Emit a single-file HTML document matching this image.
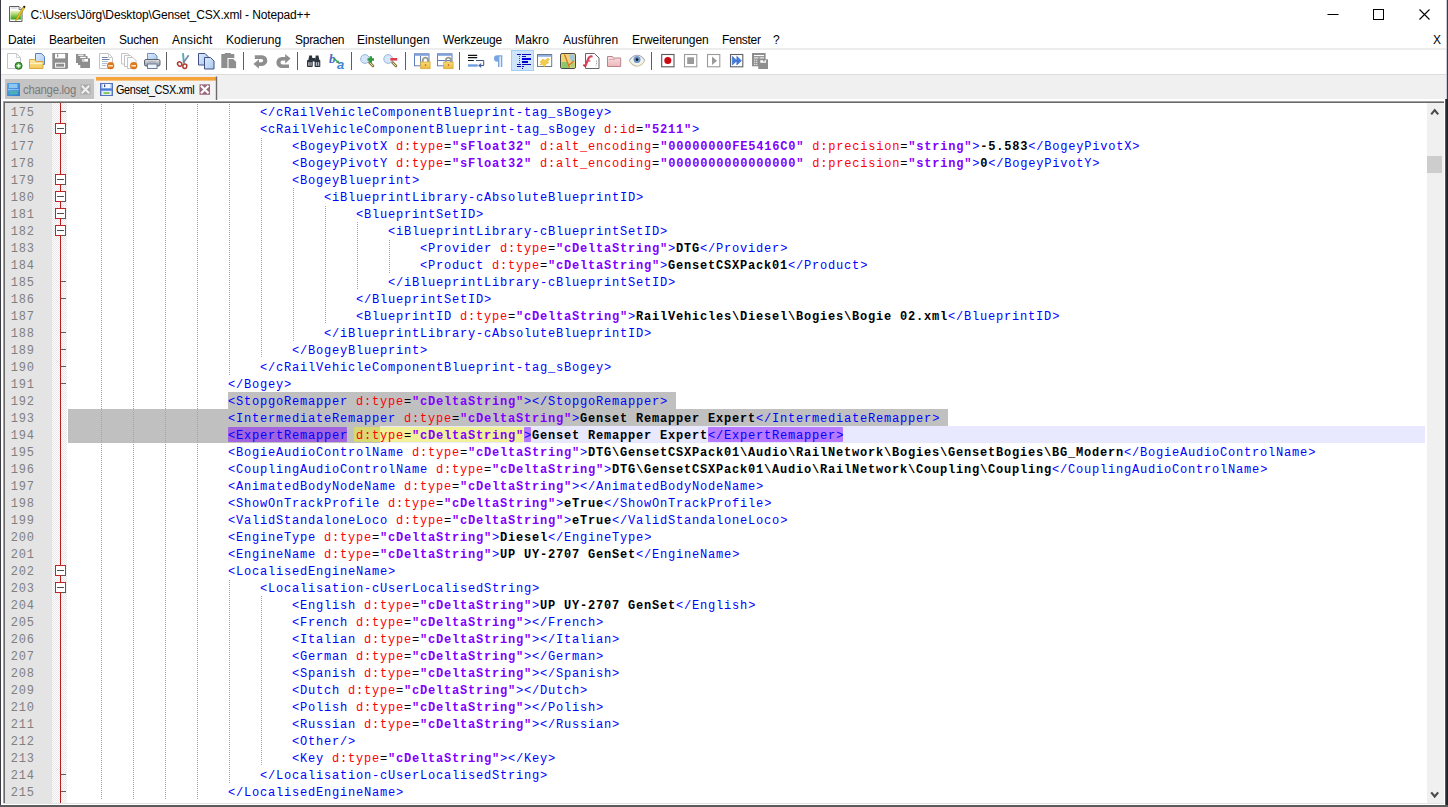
<!DOCTYPE html>
<html lang="de"><head><meta charset="utf-8"><title>Genset_CSX.xml - Notepad++</title>
<style>
*{box-sizing:border-box;margin:0;padding:0}
html,body{width:1448px;height:807px;overflow:hidden;background:#fff}
body{position:relative;font-family:"Liberation Sans",sans-serif;font-size:12px;color:#000}
.abs{position:absolute}
#title{position:absolute;left:30.500px;top:7px;height:16px;line-height:16px;font-size:12px;white-space:nowrap;letter-spacing:-0.13px}
.mi{position:absolute;top:32px;height:16px;line-height:16px;font-size:12px;white-space:nowrap}
.tabt{position:absolute;top:82px;height:16px;line-height:16px;font-size:12px;white-space:nowrap;transform-origin:0 50%}
#tbtop{position:absolute;left:1px;top:48px;width:1445px;height:2px;background:#ededed}
#tbbot{position:absolute;left:1px;top:74px;width:1445px;height:1px;background:#dcdcdc}
#tabbar{position:absolute;left:1px;top:75px;width:1445px;height:24px;background:#f0f0f0}
#edb1{position:absolute;left:3px;top:101px;width:1441px;height:703px;background:#a0a0a0}
#edb2{position:absolute;left:4px;top:102px;width:1440px;height:702px;background:#696969}
#edbg{position:absolute;left:5px;top:103px;width:1439px;height:700px;background:#fff}
#edbot{position:absolute;left:3px;top:803px;width:1441px;height:1px;background:#e3e3e3}
#lnm{position:absolute;left:5px;top:103px;width:47px;height:700px;background:#e4e4e4}
#fm{position:absolute;left:52px;top:103px;width:15px;height:700px;background-color:#fff;background-image:conic-gradient(#e6e6e6 25%,transparent 0 50%,#e6e6e6 0 75%,transparent 0);background-size:2px 2px}
#fl{position:absolute;left:60px;top:103px;width:1px;height:700px;background:#b81c1c}
.ln{position:absolute;left:10px;width:24.800px;height:17px;line-height:17.700px;text-align:right;font-family:"Liberation Mono",monospace;font-size:12px;letter-spacing:.800px;color:#808080}
.cl{position:absolute;height:17px;line-height:17.700px;white-space:pre;font-family:"Liberation Mono",monospace;font-size:12px;letter-spacing:.799px}
.t{color:#0000ff}.a{color:#ff0000}.e{color:#000}.v{color:#8000ff;font-weight:bold}.x{color:#000;font-weight:bold}
.ig{position:absolute;width:1px;background-image:linear-gradient(#a4a4a4 50%,transparent 50%);background-size:1px 2px}
.fb{position:absolute;left:55px;width:11px;height:11px;border:1px solid;border-color:#c02525 #5a5a5a #5a5a5a #c02525;background:#fff}
.fb b{position:absolute;left:0;bottom:-1px;width:5px;height:1px;background:#c02525}
.fb i{position:absolute;left:1px;top:4px;width:7px;height:1px;background:#505050}
.fe{position:absolute;left:61px;width:5px;height:1px;background:#606060}
.sel{position:absolute;height:17px;background:#c0c0c0}
.cur{position:absolute;left:68px;width:1357px;height:17px;background:#e8e8ff}
.tm{position:absolute;height:15px;background:rgba(128,0,255,.48);border-radius:1px}
.am{position:absolute;height:15px;background:rgba(255,255,0,.40);border-radius:1px}
#sb{position:absolute;left:1427px;top:103px;width:17px;height:700px;background:#f0f0f0}
#thumb{position:absolute;left:1427px;top:156px;width:15px;height:17px;background:#cdcdcd}
</style></head><body>
<div class="abs" style="left:0;top:0;width:1px;height:807px;background:#3a3d45"></div>
<div class="abs" style="left:1447px;top:0;width:1px;height:99px;background:#3a3e48"></div><div class="abs" style="left:1446px;top:0;width:1px;height:99px;background:#c8cad0"></div><div class="abs" style="left:1445px;top:99px;width:3px;height:708px;background:linear-gradient(90deg,#666c7a 0,#2a2c32 45%,#1e1f22 100%)"></div>
<div id="title">C:\Users\Jörg\Desktop\Genset_CSX.xml - Notepad++</div>
<span class="mi" style="left:8px;letter-spacing:-0.16px">Datei</span><span class="mi" style="left:49px;letter-spacing:-0.18px">Bearbeiten</span><span class="mi" style="left:119px;letter-spacing:-0.25px">Suchen</span><span class="mi" style="left:172px;letter-spacing:0.16px">Ansicht</span><span class="mi" style="left:226px;letter-spacing:0.05px">Kodierung</span><span class="mi" style="left:295px;letter-spacing:-0.27px">Sprachen</span><span class="mi" style="left:357px;letter-spacing:0.05px">Einstellungen</span><span class="mi" style="left:443px;letter-spacing:-0.16px">Werkzeuge</span><span class="mi" style="left:515px;letter-spacing:0.13px">Makro</span><span class="mi" style="left:563px;letter-spacing:0.05px">Ausführen</span><span class="mi" style="left:632px;letter-spacing:-0.05px">Erweiterungen</span><span class="mi" style="left:722px;letter-spacing:-0.28px">Fenster</span><span class="mi" style="left:773px;letter-spacing:0.00px">?</span>
<span class="mi" style="left:1433px">X</span>
<div id="tbtop"></div><div id="tbbot"></div>
<div id="tabbar"></div>
<div id="edb1"></div><div id="edb2"></div><div id="edbg"></div><div id="edbot"></div>
<div id="lnm"></div><div id="fm"></div>
<div class="cur" style="top:426px"></div><div class="sel" style="top:392px;left:228px;width:448px"></div><div class="sel" style="top:409px;left:68px;width:880px"></div><div class="sel" style="top:426px;left:68px;width:312px"></div><div class="tm" style="top:427px;left:228px;width:119px"></div><div class="am" style="top:427px;left:354px;width:170px"></div><div class="tm" style="top:427px;left:524px;width:7px"></div><div class="tm" style="top:427px;left:708px;width:135px"></div>
<div id="fl"></div>
<div class="ig" style="left:101px;top:103px;height:697px;background-position:0 1px"></div><div class="ig" style="left:133px;top:103px;height:697px;background-position:0 1px"></div><div class="ig" style="left:165px;top:103px;height:697px;background-position:0 1px"></div><div class="ig" style="left:197px;top:103px;height:697px;background-position:0 1px"></div><div class="ig" style="left:229px;top:103px;height:272px;background-position:0 1px"></div><div class="ig" style="left:229px;top:579px;height:204px;background-position:0 1px"></div><div class="ig" style="left:261px;top:137px;height:221px;background-position:0 1px"></div><div class="ig" style="left:261px;top:596px;height:170px"></div><div class="ig" style="left:293px;top:188px;height:153px"></div><div class="ig" style="left:325px;top:205px;height:119px;background-position:0 1px"></div><div class="ig" style="left:357px;top:222px;height:68px"></div><div class="ig" style="left:389px;top:239px;height:34px;background-position:0 1px"></div><div class="fe" style="top:111px"></div><div class="fb" style="top:123px"><i></i><b></b></div><div class="fb" style="top:174px"><i></i><b></b></div><div class="fb" style="top:191px"><i></i><b></b></div><div class="fb" style="top:208px"><i></i><b></b></div><div class="fb" style="top:225px"><i></i><b></b></div><div class="fe" style="top:281px"></div><div class="fe" style="top:298px"></div><div class="fe" style="top:332px"></div><div class="fe" style="top:349px"></div><div class="fe" style="top:366px"></div><div class="fe" style="top:383px"></div><div class="fb" style="top:565px"><i></i><b></b></div><div class="fb" style="top:582px"><i></i><b></b></div><div class="fe" style="top:774px"></div><div class="fe" style="top:791px"></div><div class="ln" style="top:105px">175</div><div class="ln" style="top:122px">176</div><div class="ln" style="top:139px">177</div><div class="ln" style="top:156px">178</div><div class="ln" style="top:173px">179</div><div class="ln" style="top:190px">180</div><div class="ln" style="top:207px">181</div><div class="ln" style="top:224px">182</div><div class="ln" style="top:241px">183</div><div class="ln" style="top:258px">184</div><div class="ln" style="top:275px">185</div><div class="ln" style="top:292px">186</div><div class="ln" style="top:309px">187</div><div class="ln" style="top:326px">188</div><div class="ln" style="top:343px">189</div><div class="ln" style="top:360px">190</div><div class="ln" style="top:377px">191</div><div class="ln" style="top:394px">192</div><div class="ln" style="top:411px">193</div><div class="ln" style="top:428px">194</div><div class="ln" style="top:445px">195</div><div class="ln" style="top:462px">196</div><div class="ln" style="top:479px">197</div><div class="ln" style="top:496px">198</div><div class="ln" style="top:513px">199</div><div class="ln" style="top:530px">200</div><div class="ln" style="top:547px">201</div><div class="ln" style="top:564px">202</div><div class="ln" style="top:581px">203</div><div class="ln" style="top:598px">204</div><div class="ln" style="top:615px">205</div><div class="ln" style="top:632px">206</div><div class="ln" style="top:649px">207</div><div class="ln" style="top:666px">208</div><div class="ln" style="top:683px">209</div><div class="ln" style="top:700px">210</div><div class="ln" style="top:717px">211</div><div class="ln" style="top:734px">212</div><div class="ln" style="top:751px">213</div><div class="ln" style="top:768px">214</div><div class="ln" style="top:785px">215</div><div class="cl" style="top:105px;left:260px"><span class="t">&lt;/cRailVehicleComponentBlueprint-tag_sBogey</span><span class="t">&gt;</span></div><div class="cl" style="top:122px;left:260px"><span class="t">&lt;cRailVehicleComponentBlueprint-tag_sBogey</span><span class="t"> </span><span class="a">d:id</span><span class="e">=</span><span class="v">"5211"</span><span class="t">&gt;</span></div><div class="cl" style="top:139px;left:292px"><span class="t">&lt;BogeyPivotX</span><span class="t"> </span><span class="a">d:type</span><span class="e">=</span><span class="v">"sFloat32"</span><span class="t"> </span><span class="a">d:alt_encoding</span><span class="e">=</span><span class="v">"00000000FE5416C0"</span><span class="t"> </span><span class="a">d:precision</span><span class="e">=</span><span class="v">"string"</span><span class="t">&gt;</span><span class="x">-5.583</span><span class="t">&lt;/BogeyPivotX</span><span class="t">&gt;</span></div><div class="cl" style="top:156px;left:292px"><span class="t">&lt;BogeyPivotY</span><span class="t"> </span><span class="a">d:type</span><span class="e">=</span><span class="v">"sFloat32"</span><span class="t"> </span><span class="a">d:alt_encoding</span><span class="e">=</span><span class="v">"0000000000000000"</span><span class="t"> </span><span class="a">d:precision</span><span class="e">=</span><span class="v">"string"</span><span class="t">&gt;</span><span class="x">0</span><span class="t">&lt;/BogeyPivotY</span><span class="t">&gt;</span></div><div class="cl" style="top:173px;left:292px"><span class="t">&lt;BogeyBlueprint</span><span class="t">&gt;</span></div><div class="cl" style="top:190px;left:324px"><span class="t">&lt;iBlueprintLibrary-cAbsoluteBlueprintID</span><span class="t">&gt;</span></div><div class="cl" style="top:207px;left:356px"><span class="t">&lt;BlueprintSetID</span><span class="t">&gt;</span></div><div class="cl" style="top:224px;left:388px"><span class="t">&lt;iBlueprintLibrary-cBlueprintSetID</span><span class="t">&gt;</span></div><div class="cl" style="top:241px;left:420px"><span class="t">&lt;Provider</span><span class="t"> </span><span class="a">d:type</span><span class="e">=</span><span class="v">"cDeltaString"</span><span class="t">&gt;</span><span class="x">DTG</span><span class="t">&lt;/Provider</span><span class="t">&gt;</span></div><div class="cl" style="top:258px;left:420px"><span class="t">&lt;Product</span><span class="t"> </span><span class="a">d:type</span><span class="e">=</span><span class="v">"cDeltaString"</span><span class="t">&gt;</span><span class="x">GensetCSXPack01</span><span class="t">&lt;/Product</span><span class="t">&gt;</span></div><div class="cl" style="top:275px;left:388px"><span class="t">&lt;/iBlueprintLibrary-cBlueprintSetID</span><span class="t">&gt;</span></div><div class="cl" style="top:292px;left:356px"><span class="t">&lt;/BlueprintSetID</span><span class="t">&gt;</span></div><div class="cl" style="top:309px;left:356px"><span class="t">&lt;BlueprintID</span><span class="t"> </span><span class="a">d:type</span><span class="e">=</span><span class="v">"cDeltaString"</span><span class="t">&gt;</span><span class="x">RailVehicles\Diesel\Bogies\Bogie 02.xml</span><span class="t">&lt;/BlueprintID</span><span class="t">&gt;</span></div><div class="cl" style="top:326px;left:324px"><span class="t">&lt;/iBlueprintLibrary-cAbsoluteBlueprintID</span><span class="t">&gt;</span></div><div class="cl" style="top:343px;left:292px"><span class="t">&lt;/BogeyBlueprint</span><span class="t">&gt;</span></div><div class="cl" style="top:360px;left:260px"><span class="t">&lt;/cRailVehicleComponentBlueprint-tag_sBogey</span><span class="t">&gt;</span></div><div class="cl" style="top:377px;left:228px"><span class="t">&lt;/Bogey</span><span class="t">&gt;</span></div><div class="cl" style="top:394px;left:228px"><span class="t">&lt;StopgoRemapper</span><span class="t"> </span><span class="a">d:type</span><span class="e">=</span><span class="v">"cDeltaString"</span><span class="t">&gt;</span><span class="t">&lt;/StopgoRemapper</span><span class="t">&gt;</span></div><div class="cl" style="top:411px;left:228px"><span class="t">&lt;IntermediateRemapper</span><span class="t"> </span><span class="a">d:type</span><span class="e">=</span><span class="v">"cDeltaString"</span><span class="t">&gt;</span><span class="x">Genset Remapper Expert</span><span class="t">&lt;/IntermediateRemapper</span><span class="t">&gt;</span></div><div class="cl" style="top:428px;left:228px"><span class="t">&lt;ExpertRemapper</span><span class="t"> </span><span class="a">d:type</span><span class="e">=</span><span class="v">"cDeltaString"</span><span class="t">&gt;</span><span class="x">Genset Remapper Expert</span><span class="t">&lt;/ExpertRemapper</span><span class="t">&gt;</span></div><div class="cl" style="top:445px;left:228px"><span class="t">&lt;BogieAudioControlName</span><span class="t"> </span><span class="a">d:type</span><span class="e">=</span><span class="v">"cDeltaString"</span><span class="t">&gt;</span><span class="x">DTG\GensetCSXPack01\Audio\RailNetwork\Bogies\GensetBogies\BG_Modern</span><span class="t">&lt;/BogieAudioControlName</span><span class="t">&gt;</span></div><div class="cl" style="top:462px;left:228px"><span class="t">&lt;CouplingAudioControlName</span><span class="t"> </span><span class="a">d:type</span><span class="e">=</span><span class="v">"cDeltaString"</span><span class="t">&gt;</span><span class="x">DTG\GensetCSXPack01\Audio\RailNetwork\Coupling\Coupling</span><span class="t">&lt;/CouplingAudioControlName</span><span class="t">&gt;</span></div><div class="cl" style="top:479px;left:228px"><span class="t">&lt;AnimatedBodyNodeName</span><span class="t"> </span><span class="a">d:type</span><span class="e">=</span><span class="v">"cDeltaString"</span><span class="t">&gt;</span><span class="t">&lt;/AnimatedBodyNodeName</span><span class="t">&gt;</span></div><div class="cl" style="top:496px;left:228px"><span class="t">&lt;ShowOnTrackProfile</span><span class="t"> </span><span class="a">d:type</span><span class="e">=</span><span class="v">"cDeltaString"</span><span class="t">&gt;</span><span class="x">eTrue</span><span class="t">&lt;/ShowOnTrackProfile</span><span class="t">&gt;</span></div><div class="cl" style="top:513px;left:228px"><span class="t">&lt;ValidStandaloneLoco</span><span class="t"> </span><span class="a">d:type</span><span class="e">=</span><span class="v">"cDeltaString"</span><span class="t">&gt;</span><span class="x">eTrue</span><span class="t">&lt;/ValidStandaloneLoco</span><span class="t">&gt;</span></div><div class="cl" style="top:530px;left:228px"><span class="t">&lt;EngineType</span><span class="t"> </span><span class="a">d:type</span><span class="e">=</span><span class="v">"cDeltaString"</span><span class="t">&gt;</span><span class="x">Diesel</span><span class="t">&lt;/EngineType</span><span class="t">&gt;</span></div><div class="cl" style="top:547px;left:228px"><span class="t">&lt;EngineName</span><span class="t"> </span><span class="a">d:type</span><span class="e">=</span><span class="v">"cDeltaString"</span><span class="t">&gt;</span><span class="x">UP UY-2707 GenSet</span><span class="t">&lt;/EngineName</span><span class="t">&gt;</span></div><div class="cl" style="top:564px;left:228px"><span class="t">&lt;LocalisedEngineName</span><span class="t">&gt;</span></div><div class="cl" style="top:581px;left:260px"><span class="t">&lt;Localisation-cUserLocalisedString</span><span class="t">&gt;</span></div><div class="cl" style="top:598px;left:292px"><span class="t">&lt;English</span><span class="t"> </span><span class="a">d:type</span><span class="e">=</span><span class="v">"cDeltaString"</span><span class="t">&gt;</span><span class="x">UP UY-2707 GenSet</span><span class="t">&lt;/English</span><span class="t">&gt;</span></div><div class="cl" style="top:615px;left:292px"><span class="t">&lt;French</span><span class="t"> </span><span class="a">d:type</span><span class="e">=</span><span class="v">"cDeltaString"</span><span class="t">&gt;</span><span class="t">&lt;/French</span><span class="t">&gt;</span></div><div class="cl" style="top:632px;left:292px"><span class="t">&lt;Italian</span><span class="t"> </span><span class="a">d:type</span><span class="e">=</span><span class="v">"cDeltaString"</span><span class="t">&gt;</span><span class="t">&lt;/Italian</span><span class="t">&gt;</span></div><div class="cl" style="top:649px;left:292px"><span class="t">&lt;German</span><span class="t"> </span><span class="a">d:type</span><span class="e">=</span><span class="v">"cDeltaString"</span><span class="t">&gt;</span><span class="t">&lt;/German</span><span class="t">&gt;</span></div><div class="cl" style="top:666px;left:292px"><span class="t">&lt;Spanish</span><span class="t"> </span><span class="a">d:type</span><span class="e">=</span><span class="v">"cDeltaString"</span><span class="t">&gt;</span><span class="t">&lt;/Spanish</span><span class="t">&gt;</span></div><div class="cl" style="top:683px;left:292px"><span class="t">&lt;Dutch</span><span class="t"> </span><span class="a">d:type</span><span class="e">=</span><span class="v">"cDeltaString"</span><span class="t">&gt;</span><span class="t">&lt;/Dutch</span><span class="t">&gt;</span></div><div class="cl" style="top:700px;left:292px"><span class="t">&lt;Polish</span><span class="t"> </span><span class="a">d:type</span><span class="e">=</span><span class="v">"cDeltaString"</span><span class="t">&gt;</span><span class="t">&lt;/Polish</span><span class="t">&gt;</span></div><div class="cl" style="top:717px;left:292px"><span class="t">&lt;Russian</span><span class="t"> </span><span class="a">d:type</span><span class="e">=</span><span class="v">"cDeltaString"</span><span class="t">&gt;</span><span class="t">&lt;/Russian</span><span class="t">&gt;</span></div><div class="cl" style="top:734px;left:292px"><span class="t">&lt;Other</span><span class="t">/&gt;</span></div><div class="cl" style="top:751px;left:292px"><span class="t">&lt;Key</span><span class="t"> </span><span class="a">d:type</span><span class="e">=</span><span class="v">"cDeltaString"</span><span class="t">&gt;</span><span class="t">&lt;/Key</span><span class="t">&gt;</span></div><div class="cl" style="top:768px;left:260px"><span class="t">&lt;/Localisation-cUserLocalisedString</span><span class="t">&gt;</span></div><div class="cl" style="top:785px;left:228px"><span class="t">&lt;/LocalisedEngineName</span><span class="t">&gt;</span></div>
<div id="sb"></div><div id="thumb"></div>
<div class="abs" style="left:0;top:805px;width:1448px;height:2px;background:#5c5c5c"></div>
<svg class="abs" style="left:0;top:0" width="1448" height="102" viewBox="0 0 1448 102">
<defs>
<linearGradient id="gfold" x1="0" y1="0" x2="0" y2="1"><stop offset="0" stop-color="#fbe9a6"/><stop offset="1" stop-color="#f3c85a"/></linearGradient>
<linearGradient id="gpage" x1="0" y1="0" x2="1" y2="1"><stop offset="0" stop-color="#dcebfb"/><stop offset="1" stop-color="#a9c9f0"/></linearGradient>
<linearGradient id="glock" x1="0" y1="0" x2="0" y2="1"><stop offset="0" stop-color="#f7dc7c"/><stop offset="1" stop-color="#e9b93a"/></linearGradient>
<linearGradient id="ggreen" x1="0" y1="0" x2="0" y2="1"><stop offset="0" stop-color="#e8f4d0"/><stop offset="1" stop-color="#3c9a1c"/></linearGradient>
<linearGradient id="gprn" x1="0" y1="0" x2="0" y2="1"><stop offset="0" stop-color="#e6e8ec"/><stop offset="1" stop-color="#8c929c"/></linearGradient>
<linearGradient id="gpink" x1="0" y1="0" x2="0" y2="1"><stop offset="0" stop-color="#f9e3e5"/><stop offset="1" stop-color="#eeb4ba"/></linearGradient>
</defs>
<!-- separators -->
<g fill="#5e5e5e"><rect x="166" y="52" width="1" height="18"/><rect x="243" y="52" width="1" height="18"/><rect x="297" y="52" width="1" height="18"/><rect x="351" y="52" width="1" height="18"/><rect x="405" y="52" width="1" height="18"/><rect x="459" y="52" width="1" height="18"/><rect x="651" y="52" width="1" height="18"/></g>
<!-- 1 new -->
<path d="M7.5 53.5h9l4 4v11h-13z" fill="#fdfdfd" stroke="#c4c4c8"/><path d="M16.5 53.5v4h4" fill="none" stroke="#d0d0d4"/>
<circle cx="18.600" cy="65.800" r="3.500" fill="#4aa840" stroke="#2a6a24" stroke-width="1"/><path d="M16.6 65.8h4M18.6 63.8v4" stroke="#e8ffe0" stroke-width="1.4"/>
<!-- 2 open -->
<path d="M35.5 53.5h6l3 3v8h-9z" fill="url(#gpage)" stroke="#5f7fc4"/>
<path d="M29.5 68.5v-9h5l1.5 2h7v7z" fill="url(#gfold)" stroke="#d9a93c"/>
<path d="M30 63.5h12.5" stroke="#fdf2c4" stroke-width="1"/>
<!-- 3 save gray -->
<path d="M52.3 53h15.7v15l-1 1h-14.7z" fill="#8e8e8e"/><rect x="55" y="53.8" width="10.2" height="4.6" fill="#fff"/><rect x="57.2" y="54.3" width="1" height="2.8" fill="#777"/>
<rect x="55.6" y="63.2" width="9" height="4" fill="#8e8e8e" stroke="#fff" stroke-width="1"/>
<!-- 4 save all gray -->
<g fill="#8e8e8e"><rect x="76" y="54" width="9.5" height="9"/><rect x="78" y="56" width="9.5" height="9"/><rect x="80.3" y="58.3" width="9.7" height="9.7"/></g>
<rect x="78.2" y="54.6" width="5.5" height="1.2" fill="#fff"/><rect x="80.2" y="56.8" width="5.6" height="1.3" fill="#fff"/><rect x="82.3" y="59" width="5.7" height="2.6" fill="#fff"/><rect x="83.4" y="59.3" width=".9" height="1.6" fill="#8e8e8e"/>
<!-- 5 close -->
<path d="M99.5 53.5h9l4 4v11h-13z" fill="#fdfdfd" stroke="#c4c4c8"/><path d="M108.5 53.5v4h4" fill="none" stroke="#d0d0d4"/>
<path d="M102 57.5h6M102 59.5h8M102 61.5h6M102 63.5h5M102 65.5h4" stroke="#a8b8d0" stroke-width=".9"/><path d="M102 57.5h5M102 59.5h7" stroke="#6a7a98" stroke-width=".9"/>
<circle cx="110.6" cy="65.7" r="3.4" fill="#e2791d" stroke="#c8660f" stroke-width=".5"/><rect x="108.3" y="65" width="4.6" height="1.5" fill="#ffe9c8"/>
<!-- 6 close all -->
<path d="M121.5 53.5h6l2.5 2.5v8h-8.500z" fill="#fdfdfd" stroke="#c4c4c8"/>
<path d="M124.5 55.500h6l2.5 2.5v8.500h-8.500z" fill="#fdfdfd" stroke="#c4c4c8"/>
<path d="M127.500 57.500h5.500l3 3v8h-8.500z" fill="#fdfdfd" stroke="#c4c4c8"/>
<circle cx="133.700" cy="65.7" r="3.4" fill="#e2791d" stroke="#c8660f" stroke-width=".5"/><rect x="131.400" y="65" width="4.6" height="1.5" fill="#ffe9c8"/>
<!-- 7 print -->
<path d="M147.500 60v-6.500h7l2.500 2.500v4z" fill="url(#gpage)" stroke="#6f8fc8"/>
<rect x="144.500" y="59.500" width="15.500" height="6.500" rx="1.500" fill="url(#gprn)" stroke="#5a6270"/>
<rect x="147.500" y="64" width="9.500" height="4.500" fill="#eef4fb" stroke="#6a7f9c"/><rect x="148.500" y="61.300" width="7.500" height="1.200" fill="#a8aeb8"/>
<!-- 8 cut -->
<path d="M183 53.200l.9 10.500" stroke="#55aab0" stroke-width="1.900"/><path d="M188.700 55.300l-5.400 7.400" stroke="#6f86a8" stroke-width="1.600"/>
<ellipse cx="179.700" cy="64" rx="2" ry="2.300" fill="#fff" stroke="#b03a30" stroke-width="1.500" transform="rotate(-35 179.700 64)"/>
<ellipse cx="184.800" cy="66.300" rx="2" ry="2.300" fill="#fff" stroke="#b03a30" stroke-width="1.500" transform="rotate(10 184.800 66.300)"/>
<!-- 9 copy -->
<path d="M198.500 53.500h6.500l3 3v8.500h-9.500z" fill="url(#gpage)" stroke="#3f4f86"/>
<path d="M204.500 57.500h6l3.500 3.500v8h-9.500z" fill="url(#gpage)" stroke="#3f4f86"/>
<!-- 10 paste gray -->
<path d="M221.300 54h3l1-1h5l1 1h3v14h-13z" fill="#8e8e8e"/><path d="M228 58.500h5.500l3.200 3.200v7h-8.700z" fill="#8e8e8e" stroke="#fff" stroke-width="1.100"/>
<!-- 11 undo gray -->
<path d="M254.800 55.300h7.200a5.300 5.300 0 0 1 0 10.600h-3v2.600l-5.600-4.600 5.600-4.600v2.900h2.600a1.600 1.600 0 0 0 0-3.200h-6.800z" fill="#8e8e8e"/>
<!-- 12 redo gray -->
<path d="M290.600 58.600l-5.400-4.700v3h-3.200a5.600 5.600 0 0 0 0 11.200h7v-3.700h-6.600a1.900 1.900 0 0 1 0-3.800h2.800v2.800z" fill="#8e8e8e"/>
<!-- 13 find -->
<g fill="#2c343e"><rect x="307" y="60" width="5.700" height="7" rx=".8"/><rect x="314.600" y="60" width="5.700" height="7" rx=".8"/><path d="M308.300 60l1-4.500h2.600l.8 4.500zM315 60l.8-4.500h2.600l1 4.500z"/><rect x="312" y="58" width="3.300" height="3.500"/></g>
<rect x="308.200" y="62.200" width="3.400" height="3.600" fill="#b8bec8"/><rect x="315.800" y="62.200" width="3.400" height="3.600" fill="#b8bec8"/><rect x="309.600" y="62.200" width=".8" height="3.600" fill="#2c343e"/><rect x="317.200" y="62.200" width=".8" height="3.600" fill="#2c343e"/>
<!-- 14 replace -->
<text x="329" y="62.500" font-family="Liberation Serif, serif" font-style="italic" font-weight="bold" font-size="13" fill="#4a68c4">b</text>
<text x="337" y="69" font-family="Liberation Sans, sans-serif" font-style="italic" font-weight="bold" font-size="13" fill="#3f86d8">a</text>
<path d="M334 58.500l4 3.500" stroke="#3aa04a" stroke-width="1.600"/><path d="M339.500 63.300l-3.600-.5 2.600-2.400z" fill="#3aa04a"/>
<!-- 15 zoom in -->
<path d="M369.500 62.500l3.500 3.500" stroke="#8c7a44" stroke-width="2.600" stroke-linecap="round"/><path d="M370 63l2.800 2.800" stroke="#e8d8a4" stroke-width="1" stroke-linecap="round"/>
<circle cx="365" cy="59" r="4.400" fill="#d4e6f8" stroke="#98b8dc" stroke-width="1"/>
<path d="M367.500 59.500h6.500M370.800 56.200v6.600" stroke="#2f9a3c" stroke-width="2.400"/>
<!-- 16 zoom out -->
<path d="M392.500 62.500l3.500 3.500" stroke="#8c7a44" stroke-width="2.600" stroke-linecap="round"/><path d="M393 63l2.800 2.800" stroke="#e8d8a4" stroke-width="1" stroke-linecap="round"/>
<circle cx="388.200" cy="59" r="4.400" fill="#d4e6f8" stroke="#98b8dc" stroke-width="1"/>
<rect x="390.400" y="58" width="6.800" height="2.600" fill="#e23a4a"/>
<!-- 17 sync v -->
<rect x="414.500" y="53.800" width="14.500" height="12" fill="#fff" stroke="#5f7fb8"/><rect x="414.500" y="53.800" width="14.500" height="2" fill="#7fa2dc"/><path d="M420.500 56v9.500" stroke="#5f7fb8"/>
<path d="M422.800 62v-1.800a2.600 2.600 0 0 1 5.200 0v1.800" fill="none" stroke="#9a9a94" stroke-width="1.900"/><rect x="420.700" y="62" width="9.400" height="6.700" fill="url(#glock)" stroke="#d8a62c" stroke-width=".7"/><rect x="424.900" y="64" width="1.200" height="2" fill="#d07a28"/>
<!-- 18 sync h -->
<rect x="437.500" y="53.800" width="14.500" height="12" fill="#fff" stroke="#5f7fb8"/><rect x="437.500" y="53.800" width="14.500" height="2" fill="#7fa2dc"/><path d="M438 60.500h13.500" stroke="#5f7fb8"/>
<path d="M445.800 62v-1.800a2.600 2.600 0 0 1 5.200 0v1.800" fill="none" stroke="#9a9a94" stroke-width="1.900"/><rect x="443.700" y="62" width="9.400" height="6.700" fill="url(#glock)" stroke="#d8a62c" stroke-width=".7"/><rect x="447.900" y="64" width="1.200" height="2" fill="#d07a28"/>
<!-- 19 wrap -->
<path d="M468 55.300h9.200M468 57.600h9.200M468 60.500h5.800" stroke="#111" stroke-width="1.200"/><path d="M476 60.500h7.700v5h-3" fill="none" stroke="#3f5288" stroke-width="1"/><path d="M478 65.500l3.200-2.600v5.200z" fill="#4a68a8"/><rect x="468" y="64.300" width="9.700" height="2.400" fill="#6f9ede"/>
<!-- 20 pilcrow -->
<path d="M502.300 55.200h-5a3.300 3.300 0 0 0 0 6.600h.7v5.200h1.500v-10.400h1.300v10.400h1.500z" fill="#78a6e2"/>
<!-- 21 indent guide (active) -->
<rect x="511.500" y="50.500" width="22" height="20" fill="#cde4fb" stroke="#a4cdf4"/>
<g fill="#0808b8"><rect x="517" y="54" width="4" height="1"/><rect x="522" y="54" width="9" height="1"/><rect x="522" y="56" width="4" height="1"/><rect x="522" y="58" width="9" height="2" fill="#0000e0"/><rect x="522" y="61" width="6" height="2" fill="#0000c8"/><rect x="517" y="64" width="4" height="1"/><rect x="522" y="64" width="9" height="1"/><rect x="517" y="66" width="4" height="1"/><rect x="522" y="66" width="2" height="1"/><rect x="522" y="68" width="1" height="1"/></g>
<g fill="#8a4434"><rect x="519" y="56" width="1" height="1"/><rect x="519" y="58" width="1" height="1"/><rect x="519" y="60" width="1" height="1"/><rect x="519" y="62" width="1" height="1"/></g>
<!-- 22 UDL -->
<rect x="537.500" y="54.500" width="14.200" height="12" fill="#fff" stroke="#6a7890"/><rect x="538" y="55" width="13.200" height="1.800" fill="#8fb0e4"/>
<path d="M540 62l3-3 2 1.500 3-2.500 1.500 1.500-2.500 2 2 1-3 1.500-1.500 3-1.500-2.500-3 .5 1.500-2z" fill="#f2cc4a" stroke="#e0b030" stroke-width=".5"/>
<!-- 23 doc map -->
<rect x="560.500" y="53.500" width="15" height="15" rx="1.600" fill="#f0d474" stroke="#484a44" stroke-width="1"/>
<path d="M561.500 62h6l2 6h-8z" fill="#8cc86a"/><path d="M569 54.500h5.500v7h-3.500z" fill="#9cc4e4"/><path d="M570.500 63h4v4.500h-4z" fill="#a8d07a"/>
<path d="M564.500 54.500l5 13M574 61l-5 4" stroke="#d8742c" stroke-width="1.300" fill="none"/>
<!-- 24 function list -->
<path d="M585.500 53.500h9l4.500 4.500v10.500h-13.500z" fill="#fff" stroke="#555" stroke-width=".9"/><path d="M596.500 60.500v4.500l-1.500 1.500" fill="none" stroke="#888" stroke-width=".8" stroke-dasharray="1.200 1"/>
<path d="M591.600 56.400c-1.600-.4-2.400.4-3 1.800l-3.200 7.600" fill="none" stroke="#d8485c" stroke-width="2.300" stroke-linecap="round"/><path d="M586.800 60.600l3.600.6" stroke="#d8485c" stroke-width="1.300"/><path d="M583.300 64.800l2.400 1.600" stroke="#d03048" stroke-width="1.800"/>
<!-- 25 folder pink -->
<path d="M607.500 66.500v-10h5l1 1.500h7.200v8.500z" fill="url(#gpink)" stroke="#b8848c"/><path d="M609 59.500h6" stroke="#d89aa2" stroke-width=".8"/>
<!-- 26 eye -->
<path d="M629.300 60.600c2.500-3.900 5.700-5.300 7.900-5.300s5.400 1.400 7.600 5.300c-2.200 3.900-5.400 5.600-7.600 5.600s-5.400-1.700-7.900-5.600z" fill="#f3f3f0"/>
<path d="M629.300 60.600c2.500-3.900 5.700-5.300 7.900-5.300s5.400 1.400 7.600 5.300" fill="none" stroke="#a0a8b8" stroke-width="1.100"/>
<path d="M644.800 60.600c-2.200 3.900-5.400 5.600-7.600 5.600s-5.400-1.700-7.900-5.600" fill="none" stroke="#d4c4a0" stroke-width="1.100"/>
<circle cx="637" cy="59.600" r="3.500" fill="#7096c4"/><circle cx="637" cy="59.600" r="1.300" fill="#0a1020"/>
<!-- 27 record -->
<rect x="661.700" y="54.500" width="12.300" height="12.300" fill="#fff" stroke="#5a5a5a" stroke-width="1.100"/><circle cx="667.800" cy="60.600" r="3.500" fill="#cc0a14"/>
<!-- 28 stop -->
<rect x="684.500" y="54.500" width="12.300" height="12.300" fill="#fff" stroke="#9a9a9a" stroke-width="1.100"/><rect x="687.200" y="57.300" width="6.800" height="6.700" fill="#9a9a9a"/>
<!-- 29 play -->
<rect x="707.500" y="54.500" width="12.300" height="12.300" fill="#fff" stroke="#9a9a9a" stroke-width="1.100"/><path d="M712 56.500l5 4.200-5 4.200z" fill="#9a9a9a"/>
<!-- 30 play multi -->
<rect x="730.500" y="54.500" width="12.300" height="12.300" fill="#fff" stroke="#5f6068" stroke-width="1.100"/><path d="M732.300 56.300l4.700 4.400-4.700 4.300zM736.800 56.300l4.700 4.400-4.700 4.300z" fill="#3f7fe0" stroke="#2458b8" stroke-width=".5"/>
<!-- 31 save macro gray -->
<rect x="752" y="53" width="13.600" height="13.300" fill="#8e8e8e"/><rect x="758.300" y="59.300" width="9.700" height="9.700" fill="#8e8e8e"/>
<rect x="754" y="55" width="10" height="1.100" fill="#fff"/><rect x="754" y="57.400" width="4.300" height="1" fill="#fff"/><rect x="759.500" y="57.400" width="4.500" height="1" fill="#fff"/>
<g fill="#fff"><rect x="754.200" y="59.600" width="1.100" height="1.100"/><rect x="756.200" y="59.600" width="1.100" height="1.100"/><rect x="754.200" y="61.700" width="1.100" height="1.100"/><rect x="756.200" y="61.700" width="1.100" height="1.100"/><rect x="754.200" y="63.800" width="1.100" height="1.100"/><rect x="756.200" y="63.800" width="1.100" height="1.100"/></g>
<path d="M760.300 60.300v2.400h5.700v-2.400h-1.300v1.300h-1.600v-1.300z" fill="#fff"/>
</svg>
<svg class="abs" style="left:0;top:0" width="1448" height="807" viewBox="0 0 1448 807">
<defs>
<linearGradient id="gnpp" x1="0" y1="0" x2="0" y2="1"><stop offset="0" stop-color="#eef6d8"/><stop offset=".35" stop-color="#b8dc78"/><stop offset="1" stop-color="#2f9a12"/></linearGradient>
<linearGradient id="gsv" x1="0" y1="0" x2="1" y2="1"><stop offset="0" stop-color="#5aa6e8"/><stop offset="1" stop-color="#2f7ad0"/></linearGradient>
</defs>
<!-- app icon -->
<path d="M9.500 6.500h9.500l3 3v12h-12.500z" fill="#fff" stroke="#5a5f58" stroke-width="1"/>
<path d="M10.500 10.500h10.500v9h-10.500z" fill="url(#gnpp)"/>
<path d="M11.500 8h1M13.500 8h1M15.500 8h1" stroke="#888" stroke-width="1"/>
<path d="M19 6.500v3h3" fill="#e8e8e8" stroke="#5a5f58" stroke-width=".8"/>
<path d="M23.300 6.600l-6.900 11.600-.9 2.600 2.300-1.600 7-11.400z" fill="#ecc528" stroke="#a8860c" stroke-width=".6"/><circle cx="24.300" cy="6.800" r="1.100" fill="#20140c"/>
<!-- window controls -->
<path d="M1327.500 14.500h11" stroke="#000" stroke-width="1"/>
<rect x="1373.500" y="9.500" width="10" height="10" fill="none" stroke="#000" stroke-width="1"/>
<path d="M1419.500 9.500l10 10M1429.500 9.500l-10 10" stroke="#000" stroke-width="1.100"/>
<!-- inactive tab -->
<rect x="5" y="79" width="89" height="20" fill="#c4c4c4"/>
<rect x="7" y="83" width="13" height="13" fill="url(#gsv)"/><rect x="9" y="84" width="8.500" height="4" fill="#8cc8f4"/><rect x="9.300" y="91" width="8.500" height="3.500" fill="#4ab0b8"/><rect x="8" y="89.200" width="11" height="1" fill="#cfe6fa" opacity=".7"/>
<rect x="80.500" y="84.500" width="10" height="10" fill="#a9a9a9"/><path d="M81.800 85.800l7.400 7.400M89.200 85.800l-7.400 7.400" stroke="#efefef" stroke-width="2.100"/>
<!-- active tab -->
<rect x="96" y="77" width="121" height="23" fill="#f3f3f3"/>
<rect x="96" y="77" width="120" height="3.600" fill="#f6a43a"/>
<rect x="215.800" y="76.500" width="1.400" height="23.500" fill="#6a6a6a"/>
<rect x="100" y="83" width="13" height="13" fill="#5672b8"/><rect x="101" y="84" width="11" height="11" fill="#9cbcf0"/><rect x="102.500" y="84" width="8" height="4.300" fill="#f4f8ff"/><rect x="104" y="84.500" width="1.200" height="2.600" fill="#3d4f88"/><rect x="101" y="88.500" width="11" height="2" fill="#4a7ad8"/><rect x="102" y="91" width="9" height="4" fill="#e4eefc"/><rect x="103.500" y="92.200" width="6" height="1.800" fill="#78c850"/>
<rect x="199.500" y="84.300" width="10.500" height="10.500" fill="#9a6a7c"/><path d="M201 85.800l7.500 7.500M208.500 85.800l-7.500 7.500" stroke="#fff" stroke-width="2.200"/>
<!-- scrollbar arrows -->
<path d="M1431.200 114.400l3.500-4.200 3.500 4.200" fill="none" stroke="#4a4a4a" stroke-width="2.100"/>
<path d="M1431.200 792.300l3.500 4.200 3.500-4.200" fill="none" stroke="#4a4a4a" stroke-width="2.100"/>
</svg>
<div class="tabt" style="left:23px;color:#7a7a7a;letter-spacing:-0.3px;transform:scaleX(.95)" id="tt1">change.log</div>
<div class="tabt" style="left:115.600px;color:#000;letter-spacing:-0.4px;transform:scaleX(.906)" id="tt2">Genset_CSX.xml</div>

</body></html>
